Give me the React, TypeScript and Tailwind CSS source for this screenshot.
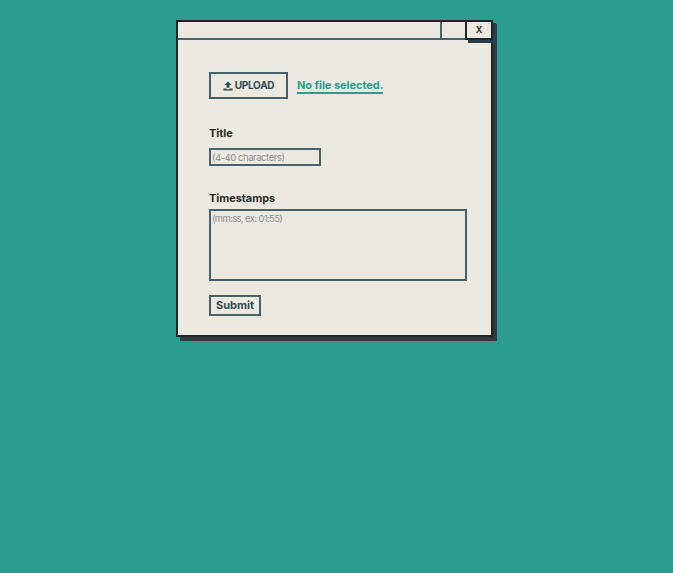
function UploadIcon() {
  return (
    <svg viewBox="0 0 24 24" className="w-[10px] h-[10px] fill-[#2f4a50]">
      <path d="M8.500 16V9.500H3.500L12 1l8.500 8.500h-5V16z" />
      <path d="M1 18h7v1.500h8V18h7v5H1z" />
    </svg>
  );
}

export default function App() {
  return (
    <div className="min-h-[573px] bg-[#2a9d8f] pt-5 font-['Inter','Liberation_Sans',sans-serif]">
      <div className="mx-auto w-[321px] pr-1">
        {/* Window */}
        <div className="relative h-[317px] border-2 border-[#1d2526] bg-[#ece9e1] shadow-[4px_4px_0_#2f3a3c]">
          {/* Title bar */}
          <div className="flex h-[18px] border-b-2 border-[#4a656b]">
            <div className="flex-1" />
            <div className="w-[25px] border-l-2 border-[#4a656b] mr-[26px]" />
          </div>
          <button className="absolute -top-[2px] -right-[2px] flex h-[20px] w-[28px] items-center justify-center border-2 border-[#1d2526] bg-[#ece9e1] text-[9px] font-bold text-[#333] shadow-[3px_3px_0_#2b3d4a]">
            X
          </button>

          {/* Form */}
          <div className="px-[31px] pt-[32px]">
            <div className="flex items-center">
              <button className="flex h-[27px] w-[79px] items-center justify-center gap-[2px] border-2 border-[#46626a] text-[10px] font-bold tracking-[-0.25px] text-[#2f4a50]">
                <UploadIcon />
                UPLOAD
              </button>
              <span className="ml-[9px] mt-[1px] border-b-2 border-[#2a9d8f] text-[11px] leading-[13px] font-bold tracking-[-0.05px] text-[#2a9d8f]">
                No file selected.
              </span>
            </div>

            <label className="mt-[27px] block text-[11px] leading-[15px] font-bold tracking-[-0.05px] text-[#2d2d2d]">Title</label>
            <input
              placeholder="(4-40 characters)"
              className="mt-[7px] block h-[18px] w-[112px] border-2 border-[#46626a] bg-transparent px-[1px] text-[9.5px] tracking-[-0.45px] outline-none placeholder:text-[#8f8f8b]"
            />

            <label className="mt-[25px] block text-[11px] leading-[15px] font-bold tracking-[-0.05px] text-[#2d2d2d]">Timestamps</label>
            <textarea
              placeholder="(mm:ss, ex: 01:55)"
              className="mt-[3px] block h-[72px] w-[258px] resize-none border-2 border-[#46626a] bg-transparent px-[1px] py-[1px] text-[9.5px] tracking-[-0.65px] outline-none placeholder:text-[#8f8f8b]"
            />

            <button className="mt-[14px] flex h-[21px] w-[52px] items-center justify-center border-2 border-[#46626a] text-[11px] font-bold text-[#2f4a50]">
              Submit
            </button>
          </div>
        </div>
      </div>
    </div>
  );
}
